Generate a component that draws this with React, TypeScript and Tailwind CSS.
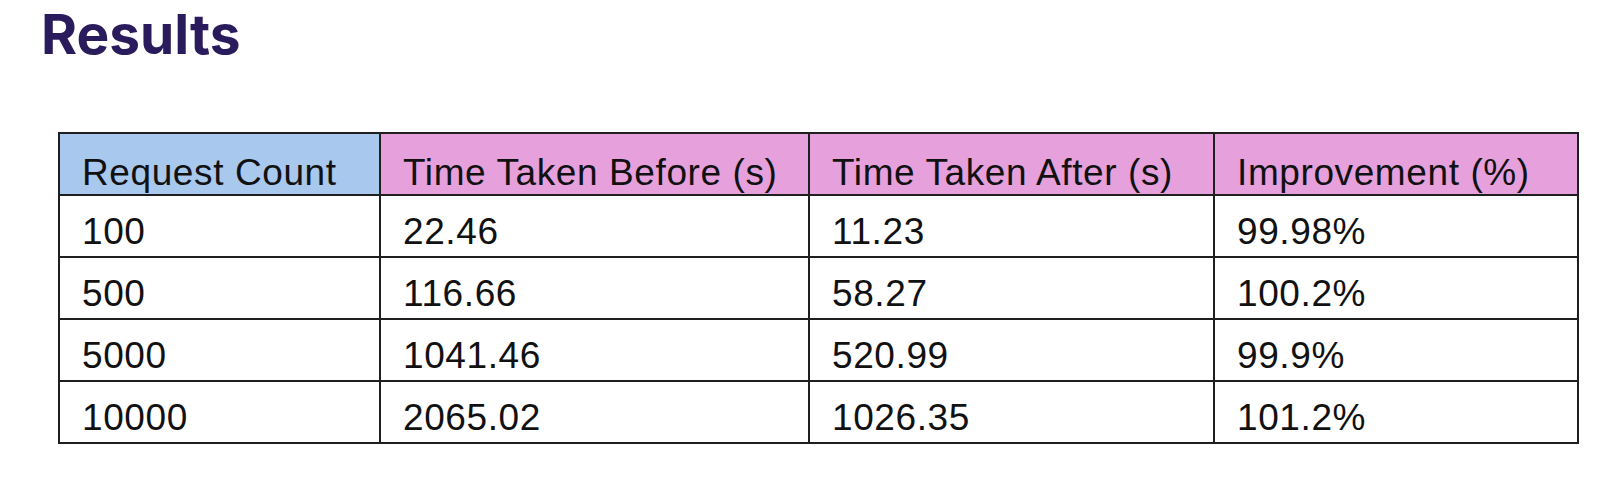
const headers = [
  { label: "Request Count", bg: "bg-[#a8c8ee]" },
  { label: "Time Taken Before (s)", bg: "bg-[#e6a0dc]" },
  { label: "Time Taken After (s)", bg: "bg-[#e6a0dc]" },
  { label: "Improvement (%)", bg: "bg-[#e6a0dc]" },
];

const rows = [
  ["100", "22.46", "11.23", "99.98%"],
  ["500", "116.66", "58.27", "100.2%"],
  ["5000", "1041.46", "520.99", "99.9%"],
  ["10000", "2065.02", "1026.35", "101.2%"],
];

export default function App() {
  return (
    <div className="min-h-[500px] w-full bg-white pl-[41px] pt-[7px]">
      <h2 className="font-['Inter',sans-serif] text-[55px] font-bold leading-none text-[#2a1b5c]">
        Results
      </h2>
      <div className="pl-[17px] pt-[70px]">
        <table className="w-[1519px] table-fixed border-collapse border-2 border-[#1f1f1f] font-['Liberation_Sans',Arial,sans-serif] text-[37px] leading-[42px] tracking-[0.6px] text-[#111]">
          <colgroup>
            <col className="w-[321px]" />
            <col className="w-[429px]" />
            <col className="w-[405px]" />
            <col className="w-[364px]" />
          </colgroup>
          <thead>
            <tr>
              {headers.map((h) => (
                <th
                  key={h.label}
                  className={`${h.bg} h-[60px] border-2 border-[#1f1f1f] px-[22px] pb-0 pt-[18px] text-left align-bottom font-normal whitespace-nowrap`}
                >
                  {h.label}
                </th>
              ))}
            </tr>
          </thead>
          <tbody>
            {rows.map((r) => (
              <tr key={r[0]}>
                {r.map((c, i) => (
                  <td
                    key={i}
                    className="h-[60px] border-2 border-[#1f1f1f] px-[22px] pb-[3px] pt-[15px] text-left align-bottom"
                  >
                    {c}
                  </td>
                ))}
              </tr>
            ))}
          </tbody>
        </table>
      </div>
    </div>
  );
}
